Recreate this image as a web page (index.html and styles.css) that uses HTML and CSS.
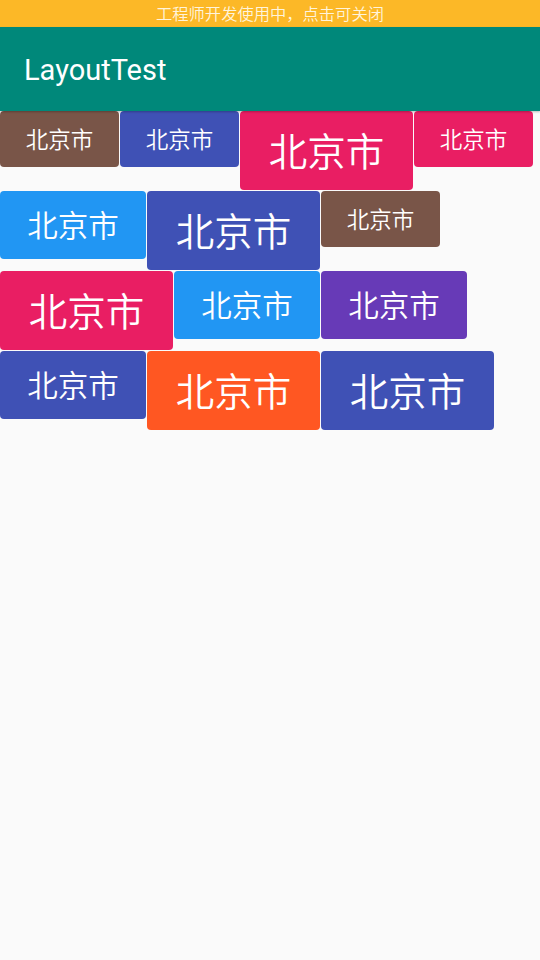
FILE: index.html
```html
<!DOCTYPE html>
<html lang="zh">
<head>
<meta charset="utf-8">
<title>LayoutTest</title>
<link rel="stylesheet" href="styles.css">
</head>
<body>
<div class="status-bar">工程师开发使用中，点击可关闭</div>
<header class="toolbar"><h1 class="title">LayoutTest</h1></header>
<main class="tags">
  <div class="tag s brown">北京市</div>
  <div class="tag s indigo">北京市</div>
  <div class="tag l pink">北京市</div>
  <div class="tag s pink">北京市</div>
  <div class="tag m blue">北京市</div>
  <div class="tag l indigo">北京市</div>
  <div class="tag s brown">北京市</div>
  <div class="tag l pink">北京市</div>
  <div class="tag m blue">北京市</div>
  <div class="tag m purple">北京市</div>
  <div class="tag m indigo">北京市</div>
  <div class="tag l orange">北京市</div>
  <div class="tag l indigo">北京市</div>
</main>
</body>
</html>
```
FILE: styles.css
```css
* { box-sizing: border-box; }
html, body {
  margin: 0;
  padding: 0;
  background: #fafafa;
  width: 540px;
  height: 960px;
  overflow: hidden;
  font-family: Roboto, "Noto Sans CJK SC", sans-serif;
}
.status-bar {
  height: 27px;
  background: #fcb827;
  color: #fff4dc;
  font-family: "Noto Sans CJK SC", sans-serif;
  font-weight: 350;
  font-size: 16.3px;
  line-height: 27px;
  text-align: center;
}
.toolbar {
  height: 84px;
  background: #00887a;
  display: flex;
  align-items: center;
  padding-left: 24px;
  box-shadow: 0 1px 2px rgba(0,0,0,0.25);
  position: relative;
  z-index: 1;
}
.title {
  margin: 0;
  color: #fff;
  font-family: Roboto, sans-serif;
  font-weight: 400;
  font-size: 29px;
  padding-top: 2px;
}
.tags {
  display: flex;
  flex-wrap: wrap;
  align-items: flex-start;
  gap: 1px;
}
.tag {
  display: flex;
  align-items: center;
  justify-content: center;
  color: #fff;
  font-family: "Noto Sans CJK SC", sans-serif;
  font-weight: 350;
  border-radius: 4px;
  line-height: 1;
  padding-bottom: 2px;
}
.tag.s { width: 119px; height: 56px; font-size: 22.5px; }
.tag.m { width: 146px; height: 68px; font-size: 30.5px; }
.tag.l { width: 173px; height: 79px; font-size: 38.5px; }
.brown { background: #795548; }
.indigo { background: #3f51b5; }
.pink { background: #e91e63; }
.blue { background: #2196f3; }
.purple { background: #673ab7; }
.orange { background: #ff5722; }
```
